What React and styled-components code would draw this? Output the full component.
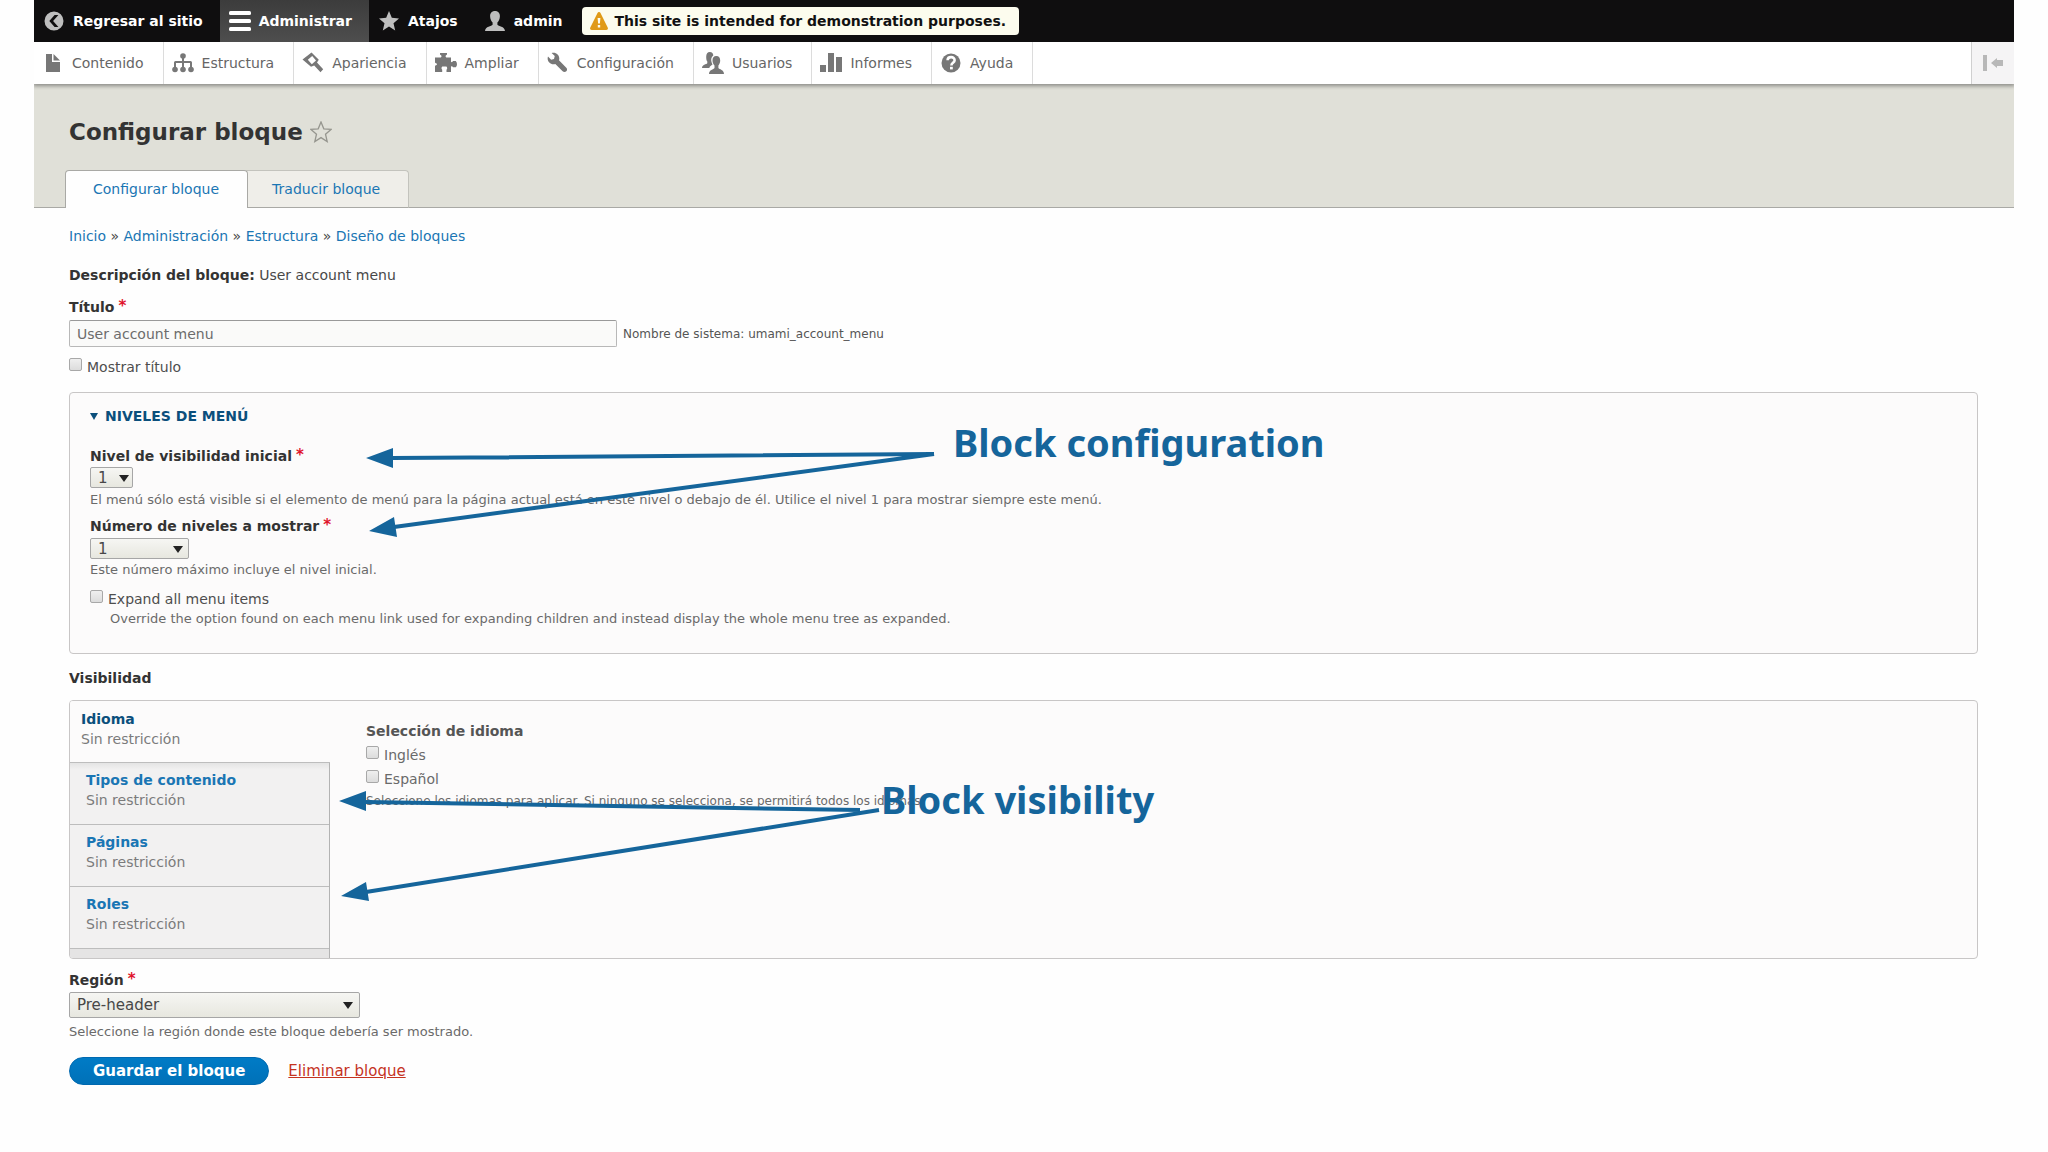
import React from 'react';
import styled, { createGlobalStyle, css } from 'styled-components';

const GlobalStyle = createGlobalStyle`
  * {
    box-sizing: border-box;
  }

  body {
    margin: 0;
    background: #fefefe;
    color: #484848;
    font-family: 'DejaVu Sans', 'Lucida Grande', sans-serif;
    font-size: 14px;
    line-height: 20px;
  }

  a {
    color: #1a76b4;
    text-decoration: none;
  }

  b {
    color: #333;
  }

  input,
  select,
  button {
    margin: 0;
    font-family: inherit;
  }
`;

const Page = styled.div`
  margin: 0 34px;
`;

/* Toolbar */

const Bar = styled.nav`
  display: flex;
  align-items: center;
  height: 42px;
  background: #0f0e0f;
`;

const BarLink = styled.a`
  display: flex;
  align-items: center;
  gap: 8px;
  height: 42px;
  padding: 0 17px 0 9px;
  color: #fff;
  font-weight: bold;
  white-space: nowrap;

  svg {
    fill: #bebebe;
  }

  ${({ $active }) =>
    $active &&
    css`
      background: linear-gradient(#3c3c3c, #4e4e4e);

      svg {
        fill: #fff;
      }
    `}
`;

const DemoNotice = styled.div`
  display: flex;
  align-items: center;
  gap: 6px;
  height: 28px;
  margin-left: 3px;
  padding: 0 13px 0 8px;
  border-radius: 4px;
  background: #fcfcee;
  color: #111;
  font-weight: bold;
  white-space: nowrap;
`;

const Tray = styled.nav`
  position: relative;
  display: flex;
  height: 42px;
  background: #fff;
  box-shadow: 0 1px 4px 1px #8a8a86;
  clip-path: inset(0 0 -6px 0);
`;

const TrayLink = styled.a`
  display: flex;
  align-items: center;
  gap: 8px;
  padding: 0 19px 0 8px;
  border-right: 1px solid #dcdcdc;
  color: #666;
  white-space: nowrap;

  svg {
    fill: #777;
  }
`;

const TrayToggle = styled.button`
  width: 43px;
  margin-left: auto;
  padding: 0 0 0 10px;
  border: 0;
  border-left: 1px solid #d0d0d0;
  background: #f5f4f5;
  text-align: left;

  svg {
    display: block;
    fill: #b8b8b8;
  }
`;

const Icon = styled.svg`
  width: 22px;
  height: 22px;
  flex: none;
`;

/* Page header */

const Header = styled.header`
  padding-top: 34px;
  border-bottom: 1px solid #a9a9a5;
  background: #e0e0d8;
`;

const TitleRow = styled.div`
  display: flex;
  align-items: center;
  gap: 7px;
  padding: 0 35px;
`;

const Title = styled.h1`
  margin: 0;
  color: #333;
  font-size: 23px;
  line-height: 28px;
`;

const StarButton = styled.button`
  padding: 0;
  border: 0;
  background: none;

  svg {
    display: block;
    fill: none;
    stroke: #96968f;
  }
`;

const Tabs = styled.nav`
  display: flex;
  margin: 24px 31px -1px;
`;

const Tab = styled.a`
  position: relative;
  z-index: 1;
  height: 38px;
  padding: 8px 28px 8px 27px;
  border: 1px solid #a9a9a5;
  border-bottom: 0;
  border-radius: 4px 4px 0 0;
  background: #fefefe;

  & + & {
    z-index: 0;
    margin-left: -4px;
    border-color: #c3c3bd;
    border-bottom: 1px solid #a9a9a5;
    background: #efeee9;
  }
`;

/* Form */

const Content = styled.main`
  padding: 18px 36px 60px 35px;
`;

const Block = styled.div`
  margin-top: ${({ $top }) => $top}px;
`;

const Label = styled.label`
  display: block;
  color: #333;
  font-weight: bold;
`;

const Heading = styled.h2`
  margin: ${({ $top }) => $top || 0}px 0 0;
  color: ${({ $muted }) => ($muted ? '#555' : '#333')};
  font-size: 14px;
  line-height: 20px;
`;

const Star = styled.span`
  margin-left: 4px;
  color: #e0142c;
  font-size: 15px;
  line-height: 1;
  vertical-align: 1px;
`;

const TitleField = styled.div`
  display: flex;
  align-items: center;
  gap: 6px;
  margin-top: 3px;
`;

const TextInput = styled.input`
  width: 548px;
  height: 27px;
  padding: 0 7px;
  border: 1px solid #b8b8b8;
  border-top-color: #999;
  border-radius: 2px;
  background: #fafaf9;
  color: #6c6c6c;
  font-size: 14px;
`;

const Small = styled.small`
  color: #555;
  font-size: 12px;
`;

const Help = styled.div`
  margin-top: ${({ $top }) => $top || 0}px;
  padding-left: ${({ $indent }) => ($indent ? 20 : 0)}px;
  color: #6a6a6a;
  font-size: ${({ $small }) => ($small ? 12 : 13)}px;
`;

const CheckLabel = styled.label`
  display: flex;
  align-items: flex-start;
  gap: 5px;
  width: max-content;
  margin-top: ${({ $top }) => $top}px;
  color: ${({ $muted }) => ($muted ? '#6a6a6a' : '#4e4e4e')};
`;

const Checkbox = styled.input.attrs({ type: 'checkbox' })`
  appearance: none;
  width: 13px;
  height: 13px;
  margin-top: 1px;
  border: 1px solid #a8a8a8;
  border-radius: 2px;
  background: linear-gradient(#efefef, #dcdcdc);
`;

const SelectBox = styled.div`
  position: relative;
  width: ${({ $width }) => $width}px;
  margin-top: ${({ $top }) => $top || 0}px;

  &::after {
    content: '';
    position: absolute;
    top: 50%;
    right: ${({ $arrow }) => $arrow || 6}px;
    margin-top: -3px;
    border: 5px solid transparent;
    border-top: 7px solid #222;
    border-bottom: 0;
    pointer-events: none;
  }
`;

const Select = styled.select`
  display: block;
  appearance: none;
  width: 100%;
  height: ${({ $tall }) => ($tall ? 26 : 21)}px;
  padding: 0 7px;
  border: 1px solid #a6a6a6;
  border-radius: 2px;
  background: linear-gradient(#f6f6f3, #e7e7df);
  color: #484848;
  font-size: 15px;
`;

const Panel = styled.section`
  position: relative;
  margin-top: ${({ $top }) => $top}px;
  border: 1px solid #c8c6c6;
  border-radius: 4px;
  background: #fcfbfb;
`;

const LevelsPanel = styled(Panel)`
  padding: 13px 20px 24px;
`;

const Summary = styled.button`
  display: flex;
  align-items: center;
  gap: 7px;
  padding: 0;
  border: 0;
  background: none;
  color: #0b4f7c;
  font-size: 14px;
  font-weight: bold;
  line-height: 20px;
  text-transform: uppercase;

  &::before {
    content: '';
    border: 4px solid transparent;
    border-top: 7px solid #0b4f7c;
    border-bottom: 0;
  }
`;

const VisibilityPanel = styled(Panel)`
  display: flex;
`;

const VerticalTabs = styled.div`
  width: 260px;
  flex: none;
  padding-bottom: 9px;
  border-right: 1px solid #b3b3b3;
  border-radius: 3px 0 0 3px;
  background: #e5e4e4;
`;

const VerticalTab = styled.a`
  display: block;
  height: 62px;
  padding: 7px 16px;
  border-bottom: 1px solid #bdbdbd;
  background: #f2f1f1;
  color: #7b7b7b;

  strong {
    display: block;
    color: #1a76b4;
  }

  ${({ $active }) =>
    $active &&
    css`
      margin-right: -1px;
      padding: 8px 11px;
      border-radius: 3px 0 0 0;
      background: #fcfbfb;

      strong {
        color: #0b4f7c;
      }

      & + a {
        background: linear-gradient(#e4e4e4, #f2f1f1 7px);
      }
    `}
`;

const TabPane = styled.div`
  flex: 1;
  padding: 20px 36px;
`;

const Actions = styled.div`
  display: flex;
  align-items: center;
  gap: 19px;
  margin-top: 15px;
  font-size: 15px;
`;

const SaveButton = styled.button`
  height: 28px;
  padding: 0 23px;
  border: 1px solid #0069b0;
  border-radius: 14px;
  background: linear-gradient(#007bc6, #0071b8);
  color: #fff;
  font-size: 15px;
  font-weight: bold;
`;

const DeleteLink = styled.a`
  color: #c5331f;
  text-decoration: underline;
`;

/* Annotations lie on top of the panels */

const Arrows = styled.svg`
  position: absolute;
  top: 0;
  left: 0;
  width: 900px;
  height: 100%;
  fill: #15659b;
  stroke: #15659b;
  pointer-events: none;
`;

const Note = styled.div`
  position: absolute;
  top: ${({ $top }) => $top}px;
  left: ${({ $left }) => $left}px;
  color: #15659b;
  font-family: 'Noto Sans', sans-serif;
  font-size: 38px;
  font-weight: bold;
  line-height: 50px;
  white-space: nowrap;
`;

const STAR = 'M11 1l2.8 6.8 7.2.6-5.5 4.8 1.7 7.3L11 16.6l-6.2 3.9 1.7-7.3L1 8.4l7.2-.6z';
const PERSON =
  'M11 1c3.2 0 4.9 2.2 4.9 5.2 0 2.6-1.3 5.2-2.5 6.4v2.2c1 1.5 7.3 1.5 7.6 6.2H1c.3-4.7 6.6-4.7 7.6-6.2v-2.2C7.4 11.4 6.1 8.8 6.1 6.2 6.1 3.2 7.8 1 11 1z';

const BackIcon = () => (
  <Icon viewBox='0 0 22 22'>
    <path
      fillRule='evenodd'
      d='M11 1.5a9.5 9.5 0 1 0 0 19 9.5 9.5 0 0 0 0-19zM11.6 5h3.8l-5.3 6 5.3 6h-3.8l-5.3-6z'
    />
  </Icon>
);

const MenuIcon = () => (
  <Icon viewBox='0 0 22 22'>
    <rect y='1' width='22' height='4' rx='1.5' />
    <rect y='9' width='22' height='4' rx='1.5' />
    <rect y='17' width='22' height='4' rx='1.5' />
  </Icon>
);

const WarningIcon = () => (
  <svg width='18' height='18' viewBox='0 0 18 18' fill='#e09a17'>
    <path
      fillRule='evenodd'
      d='M9 0c.7 0 1.2.4 1.5 1l7.2 14.6c.6 1.2 0 2.4-1.4 2.4H1.7C.3 18-.3 16.8.3 15.6L7.5 1C7.8.4 8.3 0 9 0zM7.6 6l.5 5.5h1.8l.5-5.500zM7.800 13v2.400h2.400V13z'
    />
  </svg>
);

const FileIcon = () => (
  <Icon viewBox='0 0 22 22'>
    <path d='M4 2h6v8h8v10H4z' />
    <path d='M11.5 2L18 8.500h-6.500z' />
  </Icon>
);

const TreeIcon = () => (
  <Icon viewBox='0 0 22 22'>
    <circle cx='11' cy='4' r='2.800' />
    <path d='M10 6h2v3h6.5A1.5 1.5 0 0 1 20 10.500V15h-2v-4h-6v5h-2v-5H4v4H2v-4.500A1.500 1.500 0 0 1 3.500 9H10z' />
    <circle cx='3' cy='17.500' r='2.800' />
    <circle cx='11' cy='17.500' r='2.800' />
    <circle cx='19' cy='17.500' r='2.800' />
  </Icon>
);

const BrushIcon = () => (
  <Icon viewBox='0 0 22 22'>
    <path
      fillRule='evenodd'
      d='M.5 7.500l9-7 7.300 7.200-1.800 2.800 6.200 6.800-2.700 2.900-6.300-6.700-3.200 1.300zM10.200 4L5.800 7.800l4 4.400L14 8.600z'
    />
  </Icon>
);

const PuzzleIcon = () => (
  <Icon viewBox='0 0 22 22'>
    <path d='M5 1h7v1.600c-.8.5-1.400 1-1.400 1.700 0 .5.3 1 .7 1.200H16v4.200c.5.8 1.600.6 2-.6h2.800c1.600 1.800 1.600 4.500 0 6.200H18c-.4-1.200-1.500-1.400-2-.6V20h-4.500v-2.200c1-.7.9-2.600-.1-3.200H7.300c-1 .6-1.100 2.500-.1 3.200V20H0v-6c.4-.7 1.700-.4 2-1.700-.3-1.300-1.600-1-2-1.700V5.500h5.800c.4-.2.700-.7.700-1.200 0-.7-.7-1.200-1.500-1.700z' />
  </Icon>
);

const WrenchIcon = () => (
  <Icon viewBox='0 0 17 17'>
    <path d='M14.916 12.086L9.250 6.421c.15-.449.252-.921.252-1.421 0-2.485-2.016-4.5-4.502-4.5-.505 0-.981.102-1.434.255l2.431 2.431-.588 2.196-2.196.588L.768 3.525C.606 3.989.5 4.481.5 5c0 2.486 2.014 4.500 4.500 4.500.5 0 .972-.102 1.421-.251l5.667 5.665c.781.781 2.047.781 2.828 0s.781-2.047 0-2.828z' />
  </Icon>
);

const PeopleIcon = () => (
  <Icon viewBox='0 0 22 22'>
    <path d='M7.800 0c2.300 0 3.500 1.500 3.500 3.600-1.900 1.200-2.600 3.800-1.800 6.500.3.900.6 1.600 1 2.300-1.400.9-2.700 1.700-3.200 3.600H0c.1-3.600 4.400-3.600 5.300-4.800V9.600C4.500 8.700 4.200 7 4.200 4.700 4.200 1.800 5.500 0 7.800 0z' />
    <path d='M14.300 4c2.700 0 3.900 1.800 3.900 4.500 0 2.100-.8 3.700-1.800 4.900V16c1 1.500 5.600 1.500 5.600 6H7c.1-4.400 4.600-4.500 5.500-6v-2.600c-1.200-1.300-2-3-2-5C10.500 5.700 11.700 4 14.300 4z' />
  </Icon>
);

const ChartIcon = () => (
  <Icon viewBox='0 0 22 22'>
    <rect y='13' width='6' height='7' />
    <rect x='8' y='1' width='6' height='19' />
    <rect x='16' y='5' width='6' height='15' />
  </Icon>
);

const HelpIcon = () => (
  <Icon viewBox='0 0 22 22'>
    <circle cx='11' cy='11' r='9.500' />
    <path
      d='M7.600 8.300c.1-4.300 7.200-4.100 7 .1-.1 2.500-3.200 2.400-3.200 5'
      fill='none'
      stroke='#fff'
      strokeWidth='2.600'
    />
    <path d='M11.400 14.800v2.600' stroke='#fff' strokeWidth='2.800' />
  </Icon>
);

const TRAY_ITEMS = [
  ['Contenido', FileIcon],
  ['Estructura', TreeIcon],
  ['Apariencia', BrushIcon],
  ['Ampliar', PuzzleIcon],
  ['Configuración', WrenchIcon],
  ['Usuarios', PeopleIcon],
  ['Informes', ChartIcon],
  ['Ayuda', HelpIcon],
];

const VISIBILITY_TABS = ['Idioma', 'Tipos de contenido', 'Páginas', 'Roles'];

const Toolbar = () => (
  <>
    <Bar>
      <BarLink href='#'>
        <BackIcon />
        Regresar al sitio
      </BarLink>
      <BarLink href='#' $active>
        <MenuIcon />
        Administrar
      </BarLink>
      <BarLink href='#'>
        <Icon viewBox='0 0 22 22'>
          <path d={STAR} />
        </Icon>
        Atajos
      </BarLink>
      <BarLink href='#'>
        <Icon viewBox='0 0 22 22'>
          <path d={PERSON} />
        </Icon>
        admin
      </BarLink>
      <DemoNotice>
        <WarningIcon />
        This site is intended for demonstration purposes.
      </DemoNotice>
    </Bar>
    <Tray>
      {TRAY_ITEMS.map(([name, ItemIcon]) => (
        <TrayLink href='#' key={name}>
          <ItemIcon />
          {name}
        </TrayLink>
      ))}
      <TrayToggle aria-label='Orientación vertical'>
        <svg width='24' height='18' viewBox='0 0 24 18'>
          <rect x='1' y='1' width='4' height='16' />
          <path d='M9 9l6-5v2h6v6h-6v2z' />
        </svg>
      </TrayToggle>
    </Tray>
  </>
);

const Required = () => <Star>*</Star>;

const MenuLevels = () => (
  <LevelsPanel $top={15}>
    <Summary type='button'>Niveles de menú</Summary>

    <Block $top={20}>
      <Label htmlFor='level'>
        Nivel de visibilidad inicial
        <Required />
      </Label>
      <SelectBox $width={43} $top={1} $arrow={4}>
        <Select id='level'>
          <option>1</option>
        </Select>
      </SelectBox>
      <Help $top={2}>
        El menú sólo está visible si el elemento de menú para la página actual está en este nivel o
        debajo de él. Utilice el nivel 1 para mostrar siempre este menú.
      </Help>
    </Block>

    <Block $top={6}>
      <Label htmlFor='depth'>
        Número de niveles a mostrar
        <Required />
      </Label>
      <SelectBox $width={99} $top={2}>
        <Select id='depth'>
          <option>1</option>
        </Select>
      </SelectBox>
      <Help $top={1}>Este número máximo incluye el nivel inicial.</Help>
    </Block>

    <CheckLabel $top={9}>
      <Checkbox />
      Expand all menu items
    </CheckLabel>
    <Help $indent>
      Override the option found on each menu link used for expanding children and instead display
      the whole menu tree as expanded.
    </Help>

    <Arrows>
      <path d='M864 61L322 65M864 61L324 134' fill='none' strokeWidth='4' />
      <path d='M296 65l27-10v20zM299 138l25-14 3 20z' stroke='none' />
    </Arrows>
    <Note $top={24} $left={883}>
      Block configuration
    </Note>
  </LevelsPanel>
);

const Visibility = () => (
  <VisibilityPanel $top={12}>
    <VerticalTabs>
      {VISIBILITY_TABS.map((name, i) => (
        <VerticalTab href='#' key={name} $active={i === 0}>
          <strong>{name}</strong>
          Sin restricción
        </VerticalTab>
      ))}
    </VerticalTabs>
    <TabPane>
      <Heading as='h3' $muted>
        Selección de idioma
      </Heading>
      <CheckLabel $top={4} $muted>
        <Checkbox />
        Inglés
      </CheckLabel>
      <CheckLabel $top={4} $muted>
        <Checkbox />
        Español
      </CheckLabel>
      <Help $top={2} $small>
        Seleccione los idiomas para aplicar. Si ninguno se selecciona, se permitirá todos los
        idiomas.
      </Help>
    </TabPane>

    <Arrows>
      <path d='M790 109L295 101M809 109L296 191' fill='none' strokeWidth='4' />
      <path d='M269 100l27-10v20zM271 195l25-14 3 19z' stroke='none' />
    </Arrows>
    <Note $top={73} $left={811}>
      Block visibility
    </Note>
  </VisibilityPanel>
);

const App = () => {
  return (
    <Page>
      <GlobalStyle />
      <Toolbar />

      <Header>
        <TitleRow>
          <Title>Configurar bloque</Title>
          <StarButton aria-label='Añadir a atajos'>
            <svg width='22' height='22' viewBox='0 0 22 22'>
              <path d={STAR} strokeWidth='1.300' />
            </svg>
          </StarButton>
        </TitleRow>
        <Tabs>
          <Tab href='#'>Configurar bloque</Tab>
          <Tab href='#'>Traducir bloque</Tab>
        </Tabs>
      </Header>

      <Content>
        <nav>
          <a href='#'>Inicio</a> » <a href='#'>Administración</a> » <a href='#'>Estructura</a> »{' '}
          <a href='#'>Diseño de bloques</a>
        </nav>

        <form>
          <Block $top={19}>
            <b>Descripción del bloque:</b> User account menu
          </Block>

          <Block $top={12}>
            <Label htmlFor='title'>
              Título
              <Required />
            </Label>
            <TitleField>
              <TextInput id='title' type='text' defaultValue='User account menu' />
              <Small>Nombre de sistema: umami_account_menu</Small>
            </TitleField>
          </Block>
          <CheckLabel $top={10}>
            <Checkbox />
            Mostrar título
          </CheckLabel>

          <MenuLevels />

          <Heading $top={14}>Visibilidad</Heading>
          <Visibility />

          <Block $top={11}>
            <Label htmlFor='region'>
              Región
              <Required />
            </Label>
            <SelectBox $width={291} $top={2} $arrow={7}>
              <Select id='region' $tall>
                <option>Pre-header</option>
              </Select>
            </SelectBox>
            <Help $top={4}>Seleccione la región donde este bloque debería ser mostrado.</Help>
          </Block>

          <Actions>
            <SaveButton type='button'>Guardar el bloque</SaveButton>
            <DeleteLink href='#'>Eliminar bloque</DeleteLink>
          </Actions>
        </form>
      </Content>
    </Page>
  );
};

export default App;
